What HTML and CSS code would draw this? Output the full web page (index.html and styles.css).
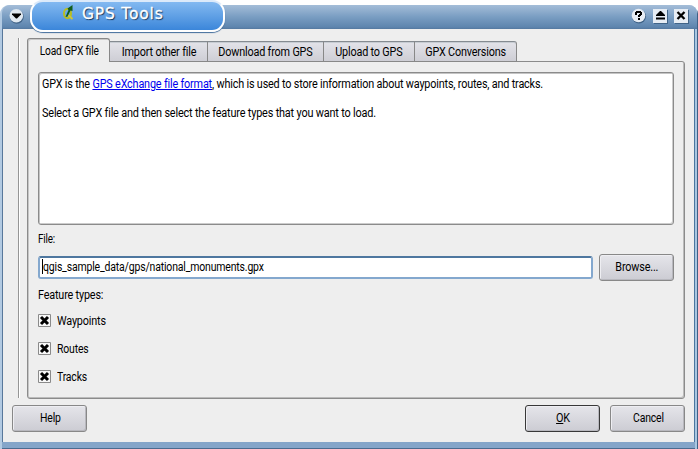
FILE: index.html
```html
<!DOCTYPE html>
<html lang="en">
<head>
<meta charset="utf-8">
<title>GPS Tools</title>
<link rel="stylesheet" href="styles.css">
</head>
<body>
<div class="window">
  <header class="titlebar">
    <svg class="menu-icon" width="16" height="18" viewBox="0 0 16 18">
      <circle cx="8.800" cy="9.800" r="7" fill="#416488"/>
      <circle cx="8.300" cy="8.800" r="6.800" fill="#dfe8f0"/>
      <path d="M4 6.500h9v1l-4 4h-1l-4-4z" fill="#000"/>
    </svg>
    <svg class="window-icons" width="58" height="18" viewBox="0 0 58 18">
      <circle cx="8" cy="9.500" r="7" fill="#416488"/>
      <circle cx="7.500" cy="8.500" r="6.800" fill="#e7edf4"/>
      <path d="M4 4h1V3h5v1h1v3h-1v1H9v1H7V7h1V6h1V5H6v2H4zM7 10h2v2H7z" transform="translate(0 1)"/>
      <path d="M23 3h14v14H23z" fill="#416488"/>
      <path d="M22 2h14v14H22z" fill="#e7edf4"/>
      <path d="M25 9V8l4-4h1l4 4v1zM25 10.500h9v2h-9z"/>
      <path d="M44 3h14v14H44z" fill="#416488"/>
      <path d="M43 2h14v14H43z" fill="#e7edf4"/>
      <path d="M46.500 5l7 7M53.500 5l-7 7" stroke="#000" stroke-width="2.300"/>
    </svg>
  </header>
  <div class="caption">
    <svg width="14" height="18" viewBox="0 0 14 18">
      <ellipse cx="5.500" cy="9.500" rx="3.500" ry="4.700" fill="none" stroke="#b8bd22" stroke-width="2"/>
      <path d="M6 11l4.500 4" stroke="#d0c832" stroke-width="2"/>
      <path d="M10.500 1v6l-2-.5-3 6-2 .5 3-7-1-1.500z" fill="#125d1c"/>
    </svg>
    <span>GPS Tools</span>
  </div>
  <main class="content">
    <div class="rule"></div>
    <section class="tabs">
      <nav class="tabbar">
        <div class="tab active"><span class="t t-load">Load GPX file</span></div>
        <div class="tab import"><span class="t">Import other file</span></div>
        <div class="tab download"><span class="t">Download from GPS</span></div>
        <div class="tab upload"><span class="t">Upload to GPS</span></div>
        <div class="tab convert"><span class="t">GPX Conversions</span></div>
      </nav>
      <div class="pane">
        <div class="info">
          <p><span class="t">GPX is the <a href="#">GPS eXchange file format</a>, which is used to store information about waypoints, routes, and tracks.</span></p>
          <p><span class="t t-select">Select a GPX file and then select the feature types that you want to load.</span></p>
        </div>
        <div class="label file-label"><span class="t t-file">File:</span></div>
        <div class="file-row">
          <div class="field"><i class="caret"></i><span class="t t-path">qgis_sample_data/gps/national_monuments.gpx</span></div>
          <div class="button"><span class="t">Browse...</span></div>
        </div>
        <div class="label types-label"><span class="t">Feature types:</span></div>
        <div class="check"><svg width="13" height="13" viewBox="0 0 13 13"><path d="M.5.5h12v12H.5z" fill="#f7f7f7" stroke="#8a8a8a"/><path d="M3 3l7 7M10 3l-7 7" stroke="#000" stroke-width="3"/></svg><span class="t">Waypoints</span></div>
        <div class="check"><svg width="13" height="13" viewBox="0 0 13 13"><path d="M.5.5h12v12H.5z" fill="#f7f7f7" stroke="#8a8a8a"/><path d="M3 3l7 7M10 3l-7 7" stroke="#000" stroke-width="3"/></svg><span class="t t-tight">Routes</span></div>
        <div class="check"><svg width="13" height="13" viewBox="0 0 13 13"><path d="M.5.5h12v12H.5z" fill="#f7f7f7" stroke="#8a8a8a"/><path d="M3 3l7 7M10 3l-7 7" stroke="#000" stroke-width="3"/></svg><span class="t t-tight">Tracks</span></div>
      </div>
    </section>
  </main>
  <footer class="actions">
    <div class="button help"><span class="t t-tight">Help</span></div>
    <div class="button default"><span class="t"><u>O</u>K</span></div>
    <div class="button"><span class="t t-tight">Cancel</span></div>
  </footer>
</div>
</body>
</html>
```
FILE: styles.css
```css
* { box-sizing: border-box; }
body { margin: 0; background: #fff; overflow: hidden; font: 12.5px/15px Roboto, "Liberation Sans", sans-serif; color: #000; }
.window {
  position: relative;
  width: 698px; height: 444px; margin-top: 5px;
  display: flex; flex-direction: column;
  padding: 0 1px 2px 2px;
  background: linear-gradient(90deg, #b2cae2 0 2px, transparent 2px 695px, #a9c7e1 695px 697px, #3f6186 697px), linear-gradient(#b2cae2 442px, #4a6b8f 442px);
  border-radius: 9px 9px 0 0;
}
.titlebar {
  flex: none; height: 24px;
  background: linear-gradient(#a4bdd8, #799dc2 50%, #5e85ae 92%, #54789f);
  border-radius: 8px 8px 0 0;
  display: flex; justify-content: space-between; align-items: flex-start;
  padding: 2px 8px 0 6px;
}
.caption {
  position: absolute; left: 30px; top: -5px;
  width: 195px; height: 32px;
  border: 2px solid #fff; border-top-color: #dceafa; border-radius: 13px;
  background: linear-gradient(#83b9f1, #60a0e5 50%, #3b86da);
  box-shadow: 0 1px 1px #416c9b;
  color: #fff; font: 15.5px/19px "DejaVu Sans", sans-serif; letter-spacing: 0.8px;
  -webkit-text-stroke: 0.3px #fff; text-shadow: 1px 1px 1px #0c2c50;
  display: flex; gap: 6px; padding: 2px 0 0 30px;
}
.caption span { padding-top: 1px; }
.content {
  flex: 1; display: flex;
  background: #eee; border-left: 1px solid #58789b; border-right: 1px solid #4b769f;
  width: 693px; padding: 9px 9px 0 15px;
}
.rule { width: 2px; height: 360px; background: #959595; border-right: 1px solid #fff; margin-right: 7px; }
.tabs { flex: 1; height: 361px; }
.tabbar { display: flex; align-items: flex-end; height: 24px; position: relative; }
.tab {
  height: 21px; display: flex; justify-content: center; align-items: center; padding-bottom: 1px;
  background: linear-gradient(#e3e3e9, #ceced5);
  border: 1px solid #888; border-left: 0; border-top-color: #858b91;
  box-shadow: inset 0 1px #c7ccd2;
}
.tab .t, .button .t { transform-origin: 50% 50%; }
.tab.active { z-index: 1; width: 83px; height: 24px; padding: 0 0 0 2px; background: #eee; border: 1px solid #888; border-bottom: 0; border-radius: 3px 3px 0 0; box-shadow: inset 1px 1px #c8c8c8; }
.import { width: 98px; }
.download { width: 116px; }
.upload { width: 91px; }
.convert { width: 102px; border-radius: 0 3px 0 0; padding-left: 1px; }
.pane {
  height: 338px; margin-top: -1px; padding: 10px 10px 0;
  border: 1px solid #8b8b8b; border-radius: 0 3px 3px 3px;
  box-shadow: inset -1px -1px #bbb, inset 1px 0 #c5c5c5;
}
.info {
  height: 153px; background: #fff; border: 1px solid #8b8b8b; border-radius: 3px;
  box-shadow: inset 1px 1px #c4c4c4, inset -1px -1px #ccc; padding: 3px 3px;
}
.info p { margin: 0 0 14px; height: 15px; }
a { color: #00e; }
.t { white-space: nowrap; display: inline-block; letter-spacing: -0.2px; transform-origin: 0 50%; transform: scaleX(0.866); }
.t-select { transform: scaleX(0.87); }
.t-load { transform: scaleX(0.815); }
.t-path { transform: scaleX(0.838); }
.t-tight { transform: scaleX(0.835); }
.t-file { transform: scaleX(0.79); }
.label { height: 15px; }
.file-label { margin-top: 6px; }
.file-row { display: flex; align-items: center; justify-content: space-between; margin-top: 8px; height: 27px; }
.field {
  width: 555px; height: 23px; background: #fff; border: 2px solid #84a8ce;
  border-top-color: #4e779f; border-radius: 3px; padding: 1px 2px; display: flex;
}
.caret { width: 1px; height: 15px; background: #000; }
.button {
  width: 75px; height: 27px; display: flex; align-items: center; justify-content: center; padding: 0 0 2px 1px;
  background: linear-gradient(#e5e5ea, #ccccd3); border: 1px solid #888; border-radius: 3px;
  box-shadow: inset 1px 1px #eeeef2, inset -1px -1px #b8b8be;
}
.types-label { margin-top: 6px; margin-bottom: 11px; }
.check { display: flex; align-items: center; gap: 6px; height: 15px; margin-bottom: 13px; }
.actions {
  width: 693px; height: 43px; background: #eee; flex: none;
  border-left: 1px solid #58789b; border-right: 1px solid #4b769f;
  display: flex; padding: 6px 9px 0; gap: 10px;
  box-shadow: 0 6px #84a5c9; margin-bottom: 6px;
}
.help { margin-right: auto; }
.default { border-color: #383838; }
```
